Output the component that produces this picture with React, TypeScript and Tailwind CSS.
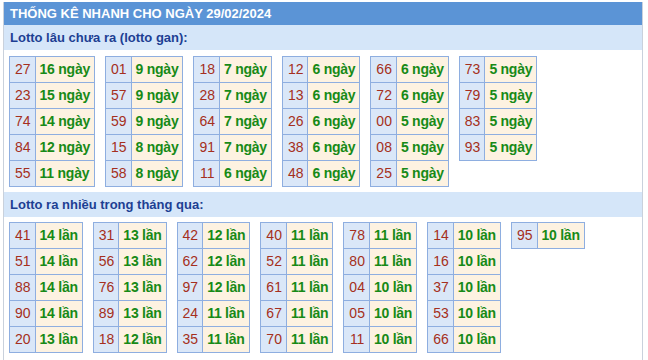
import React from "react";

type Row = [string, string];

const gan: Row[][] = [
  [["27", "16"], ["23", "15"], ["74", "14"], ["84", "12"], ["55", "11"]],
  [["01", "9"], ["57", "9"], ["59", "9"], ["15", "8"], ["58", "8"]],
  [["18", "7"], ["28", "7"], ["64", "7"], ["91", "7"], ["11", "6"]],
  [["12", "6"], ["13", "6"], ["26", "6"], ["38", "6"], ["48", "6"]],
  [["66", "6"], ["72", "6"], ["00", "5"], ["08", "5"], ["25", "5"]],
  [["73", "5"], ["79", "5"], ["83", "5"], ["93", "5"]],
];

const nhieu: Row[][] = [
  [["41", "14"], ["51", "14"], ["88", "14"], ["90", "14"], ["20", "13"]],
  [["31", "13"], ["56", "13"], ["76", "13"], ["89", "13"], ["18", "12"]],
  [["42", "12"], ["62", "12"], ["97", "12"], ["24", "11"], ["35", "11"]],
  [["40", "11"], ["52", "11"], ["61", "11"], ["67", "11"], ["70", "11"]],
  [["78", "11"], ["80", "11"], ["04", "10"], ["05", "10"], ["11", "10"]],
  [["14", "10"], ["16", "10"], ["37", "10"], ["53", "10"], ["66", "10"]],
  [["95", "10"]],
];

function LotTable({ rows, unit }: { rows: Row[]; unit: string }) {
  return (
    <table className="border-collapse">
      <tbody>
        {rows.map(([n, c], i) => (
          <tr key={i}>
            <td className="border border-[#8eaee0] bg-[#dae7f8] pl-[5px] pr-[4px] py-[4px] text-[14px] leading-[17px] text-[#a52f20] text-center">
              {n}
            </td>
            <td className="border border-[#8eaee0] bg-[#fdf2e1] px-[4px] py-[4px] text-[14px] leading-[17px] tracking-[-0.25px] font-bold text-[#178a17] whitespace-nowrap">
              {c} {unit}
            </td>
          </tr>
        ))}
      </tbody>
    </table>
  );
}

function SubHeader({ text }: { text: string }) {
  return (
    <div className="h-[25px] bg-[#d5e6f9] flex items-center pl-[6px] text-[13px] font-bold text-[#1d3f93]">
      {text}
    </div>
  );
}

export default function App() {
  return (
    <div
      className="w-[648px] h-[360px] bg-white overflow-hidden pt-[2px] pl-[3px]"
      style={{ fontFamily: '"Liberation Sans", Arial, sans-serif' }}
    >
      <div className="w-[640px] h-[358px] border-r border-l border-[#c9d1dc]">
        <div className="h-[23px] bg-[#5b94d6] flex items-center pl-[6px] text-[13px] font-bold text-white">
          THỐNG KÊ NHANH CHO NGÀY 29/02/2024
        </div>
        <SubHeader text="Lotto lâu chưa ra (lotto gan):" />
        <div className="flex items-start gap-[10px] pl-[5px] pt-[6px] pb-[5px]">
          {gan.map((t, i) => (
            <LotTable key={i} rows={t} unit="ngày" />
          ))}
        </div>
        <SubHeader text="Lotto ra nhiều trong tháng qua:" />
        <div className="flex items-start gap-[10px] pl-[5px] pt-[5px]">
          {nhieu.map((t, i) => (
            <LotTable key={i} rows={t} unit="lần" />
          ))}
        </div>
      </div>
    </div>
  );
}
